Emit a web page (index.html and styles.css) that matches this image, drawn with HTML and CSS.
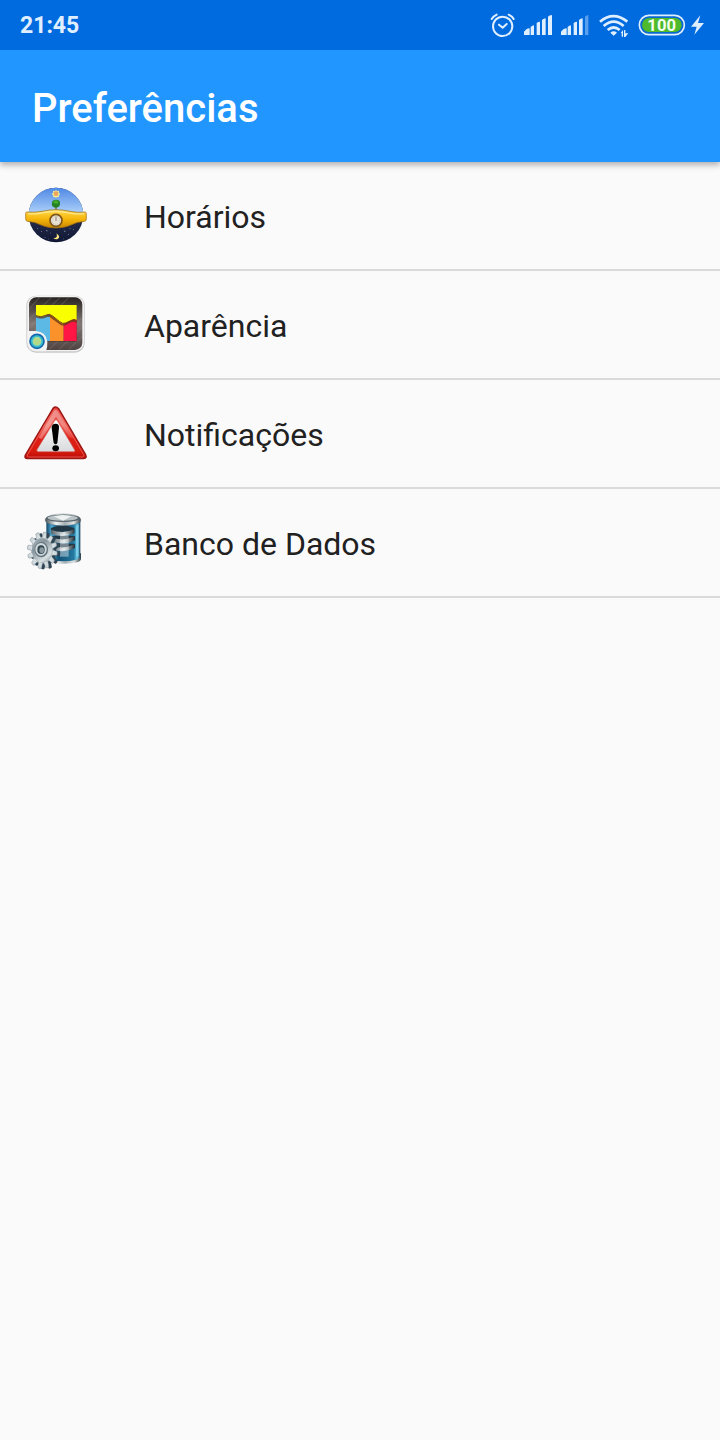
FILE: index.html
```html
<!DOCTYPE html>
<html lang="pt-BR">
<head>
<meta charset="utf-8">
<meta name="viewport" content="width=device-width, initial-scale=1">
<title>Preferências</title>
<link rel="stylesheet" href="styles.css">
</head>
<body>
<div class="status-bar">
  <time class="clock">21:45</time>
  <div class="status-icons">
    <svg class="alarm" viewBox="30 30 78 90" aria-label="Alarme">
      <g fill="none" stroke="#e0efff" stroke-width="6" stroke-linecap="round" stroke-linejoin="round">
        <circle cx="68" cy="79" r="29"/>
        <path d="M57 74l11 9 12-11M35 57q5-8 15-13M86 44q11 5 15 13"/>
      </g>
    </svg>
    <svg class="signal" viewBox="132 30 87 90" aria-label="Sinal 1">
      <path fill="#e0efff" d="M132 105v-10l7-7q5-3 10-3v20zM152 105V81q5-5 10-5v29zM170 105V69q5-4 10-4v40zM186 105V60q5-5 11-5v50zM204 105V50q5-5 10-5q2 0 2 3v57z"/>
    </svg>
    <svg class="signal" viewBox="243 30 87 90" aria-label="Sinal 2">
      <path fill="#e0efff" d="M243 105v-10l7-7q5-3 10-3v20zM263 105V81q5-5 10-5v29zM281 105V69q5-4 10-4v40zM297 105V60q5-5 11-5v50z"/>
      <path fill="#5a9fed" d="M315 105V50q5-5 10-5v60z"/>
    </svg>
    <svg class="wifi" viewBox="24 30 96 90" aria-label="Wi-Fi">
      <g fill="none" stroke="#e0efff" stroke-width="8">
        <path d="M30 65Q70 32 112 65M41 78Q71 52 101 78M53 90Q71 75 89 90"/>
      </g>
      <path fill="#e0efff" d="M61 98q10-8 20 0l-10 9zM92 99l7-9v20h-4v-11zM102 90h4v10h9l-9 11h-4z"/>
    </svg>
    <svg class="battery" viewBox="141 30 141 90" aria-label="Bateria">
      <rect x="145" y="46" width="135" height="58" rx="29" fill="#0869cf" stroke="#e0efff" stroke-width="5"/>
      <rect x="153" y="54" width="119" height="42" rx="21" fill="#4fba2c"/>
      <text x="212" y="93" class="charge">100</text>
    </svg>
    <svg class="bolt" viewBox="309 30 39 90" aria-label="Carregando">
      <path fill="#e0efff" d="M331 46l-28 34h17l-7 24 29-35h-18z"/>
    </svg>
  </div>
</div>
<header class="app-bar"><h1 class="title">Preferências</h1></header>
<main>
  <nav class="preferences" aria-label="Preferências">
    <a class="item" href="#horarios">
      <svg class="icon" viewBox="24 12 192 192" aria-hidden="true">
        <defs>
          <linearGradient id="sky" x2="0" y2="1"><stop stop-color="#4f88e4"/><stop offset="1" stop-color="#b4d6fb"/></linearGradient>
          <linearGradient id="night" x2="0" y2="1"><stop offset=".5" stop-color="#29314d"/><stop offset="1" stop-color="#101735"/></linearGradient>
          <linearGradient id="gold" x2="0" y2="1"><stop stop-color="#ffd94d"/><stop offset=".5" stop-color="#f6b70b"/><stop offset="1" stop-color="#c98600"/></linearGradient>
        </defs>
        <circle cx="120" cy="105" r="82" fill="url(#night)"/>
        <path fill="url(#sky)" d="M38 105a82 82 0 0 1 164 0z"/>
        <path fill="#fcf08f" d="M120 29l3 5 6-2-1 6 5 4-5 4 1 6-6-2-3 5-3-5-6 2 1-6-5-4 5-4-1-6 6 2z"/>
        <circle cx="120" cy="41" r="7" fill="#eca45b"/>
        <path stroke="#876425" stroke-width="4" d="M120 77v17"/>
        <path fill="#238324" d="M108 67q2-8 12-8 13 0 12 11 0 13-12 13-15 0-12-16z"/>
        <path fill="#46aa2c" d="M111 67q3-6 9-6 7 1 7 8-8 6-16-2z"/>
        <path fill="url(#gold)" stroke="#9a6911" stroke-width="2" d="M32 96q26 2 46-2 22-5 42-5t42 5q22 5 45 2 4 0 4 5v16q0 6-5 7-24 2-43 12-18 8-43 8t-43-8q-19-10-43-12-5-1-5-7v-16q0-5 3-5z"/>
        <path fill="none" stroke="#ffe789" stroke-width="4" d="M36 101q28 2 46-3 34-7 72 0 26 5 50 3"/>
        <circle cx="120" cy="121" r="18" fill="#e9e2d4" stroke="#805518" stroke-width="5"/>
        <circle cx="120" cy="121" r="12" fill="none" stroke="#a69b89" stroke-width="2" stroke-dasharray="2 4"/>
        <path stroke="#594e43" stroke-width="2" d="M120 110v13"/>
        <path fill="#ffe780" d="M121 160q15 11 4 17-6 3-13-3 7 1 10-3 3-4-1-11z"/>
        <path fill="#a5b4dc" d="M64 144h2v2h-2zM76 154h2v2h-2zM91 151h3v3h-3zM86 171h2v2h-2zM103 158h2v2h-2zM145 152h3v3h-3zM157 163h2v2h-2zM172 148h2v2h-2zM141 176h2v2h-2zM96 176h2v2h-2zM161 145h2v2h-2z"/>
      </svg>
      <span>Horários</span>
    </a>
    <a class="item" href="#aparencia">
      <svg class="icon" viewBox="24 15 192 192" aria-hidden="true">
        <defs>
          <linearGradient id="slate" x2="0" y2="1"><stop stop-color="#292421"/><stop offset=".5" stop-color="#827976"/><stop offset="1" stop-color="#4e4341"/></linearGradient>
          <clipPath id="panel"><rect x="39" y="28" width="160" height="158" rx="22"/></clipPath>
        </defs>
        <rect x="31" y="23" width="175" height="171" rx="29" fill="#c9c9c9"/>
        <rect x="34" y="24" width="170" height="166" rx="28" fill="#f2f2f2"/>
        <rect x="39" y="28" width="160" height="158" rx="22" fill="url(#slate)"/>
        <g clip-path="url(#panel)">
          <path stroke="#b0a5a0" stroke-opacity=".18" stroke-width="4" d="M36 67l36-40M40 94l68-67M39 120l94-93M40 145L159 28M99 185l100-96M128 185l71-68M157 185l42-40"/>
          <rect x="61" y="51" width="122" height="110" fill="#2f211e" opacity=".5"/>
          <path fill="#5cb9e5" d="M60 82h43v77H60z"/>
          <path fill="#fa912a" d="M102 80h41v79h-41z"/>
          <path fill="#ff1645" d="M143 92h39v67h-39z"/>
          <path fill="#5b3717" opacity=".75" d="M60 83q14 7 27 1 12-8 22 1l23 18q8 8 20 0l14-6q8-4 16 3v5q-9-7-17-2l-14 7q-12 6-21-2l-22-16q-9-9-20-3-16 6-28-1z"/>
          <path fill="#faff00" d="M60 51h122v46q-8-5-16 0l-17 8q-9 4-18-4l-21-17q-10-9-21-2-14 8-29 1z"/>
          <path fill="none" stroke="#744311" stroke-width="3" d="M60 83q15 7 29-1 11-7 21 2l21 17q9 8 18 4l17-8q8-5 16 0"/>
        </g>
        <path fill="#f2f2f2" d="M34 129h26q30 2 34 32 1 15-4 29H60q-26-1-26-27z"/>
        <circle cx="63" cy="160" r="20" fill="#9bdbaa" stroke="#1768ac" stroke-width="7"/>
        <circle cx="63" cy="160" r="16" fill="#a7dc9b" stroke="#32b9d0" stroke-width="5"/>
        <circle cx="63" cy="160" r="10" fill="#b3d987"/>
      </svg>
      <span>Aparência</span>
    </a>
    <a class="item" href="#notificacoes">
      <svg class="icon" viewBox="24 12 192 192" aria-hidden="true">
        <defs>
          <linearGradient id="red" x2="0" y2="1"><stop stop-color="#dd2a24"/><stop offset=".35" stop-color="#ef5a50"/><stop offset=".6" stop-color="#df2019"/><stop offset=".85" stop-color="#d91b0d"/><stop offset="1" stop-color="#b90c08"/></linearGradient>
          <linearGradient id="shine" x2="1" y2="1"><stop stop-color="#fff" stop-opacity=".55"/><stop offset="1" stop-color="#fff" stop-opacity=".1"/></linearGradient>
          <linearGradient id="sheet" x2="0" y2="1"><stop stop-color="#fff"/><stop offset="1" stop-color="#d9dadd"/></linearGradient>
        </defs>
        <path fill="url(#red)" stroke="#991715" stroke-width="4" stroke-linejoin="round" d="M111 31q8-8 17 1l81 138q5 11-6 12H34q-10-1-6-11z"/>
        <path fill="none" stroke="#f4776c" stroke-width="2" stroke-linejoin="round" d="M114 35q5-5 10 0l79 135q3 6-4 7H38q-6-1-4-6z"/>
        <path fill="url(#shine)" d="M115 37q5-3 9 1l51 85-15-5-40-62-43 67-9-4z"/>
        <path fill="url(#sheet)" stroke="#d0655f" stroke-width="2" stroke-linejoin="round" d="M116 68q4-5 8 0l52 88q2 5-3 5H66q-5-1-3-6z"/>
        <path d="M107 89q0-12 12-12 11 0 10 12l-5 46q-5 8-11 0z"/>
        <ellipse cx="119" cy="151" rx="10" ry="9"/>
      </svg>
      <span>Notificações</span>
    </a>
    <a class="item" href="#banco-de-dados">
      <svg class="icon" viewBox="24 15 192 192" aria-hidden="true">
        <defs>
          <linearGradient id="glass"><stop stop-color="#164565"/><stop offset=".15" stop-color="#4aa5d0"/><stop offset=".35" stop-color="#145177"/><stop offset=".8" stop-color="#24789f"/><stop offset=".91" stop-color="#68c9e7"/><stop offset="1" stop-color="#123b59"/></linearGradient>
          <linearGradient id="metal"><stop stop-color="#465158"/><stop offset=".3" stop-color="#f3f6f6"/><stop offset=".55" stop-color="#a5afb3"/><stop offset=".8" stop-color="#e0e5e6"/><stop offset="1" stop-color="#354047"/></linearGradient>
          <linearGradient id="disk"><stop stop-color="#59636b"/><stop offset=".55" stop-color="#d5dfe2"/><stop offset="1" stop-color="#202c35"/></linearGradient>
          <linearGradient id="steel" x1="28" y1="78" x2="126" y2="190" gradientUnits="userSpaceOnUse"><stop stop-color="#c4ced2"/><stop offset=".4" stop-color="#87959d"/><stop offset=".65" stop-color="#d8e0e2"/><stop offset="1" stop-color="#3f5564"/></linearGradient>
          <path id="tooth" d="M-8-36l2-18q6-3 12 0l2 18z"/>
          <g id="gear">
            <circle r="40"/>
            <use href="#tooth"/><use href="#tooth" transform="rotate(30)"/><use href="#tooth" transform="rotate(60)"/><use href="#tooth" transform="rotate(90)"/>
            <use href="#tooth" transform="rotate(120)"/><use href="#tooth" transform="rotate(150)"/><use href="#tooth" transform="rotate(180)"/><use href="#tooth" transform="rotate(210)"/>
            <use href="#tooth" transform="rotate(240)"/><use href="#tooth" transform="rotate(270)"/><use href="#tooth" transform="rotate(300)"/><use href="#tooth" transform="rotate(330)"/>
          </g>
          <linearGradient id="gear-face" x1="-40" y1="-50" x2="40" y2="50" gradientUnits="userSpaceOnUse"><stop stop-color="#a9b6bc"/><stop offset=".3" stop-color="#e0e7e9"/><stop offset=".5" stop-color="#95a3aa"/><stop offset=".7" stop-color="#d3dcdf"/><stop offset="1" stop-color="#61747f"/></linearGradient>
        </defs>
        <path fill="url(#metal)" d="M90 145v13q2 15 53 15 49 0 52-13v-18z"/>
        <path fill="url(#glass)" d="M91 45h102v108q-11 13-51 13-39 0-51-13z"/>
        <path fill="#203846" d="M105 66q34-15 70 0v14q-35 14-70 0zM105 90h70v13q-35 15-70 0zM105 113h70v13q-35 16-70 0z"/>
        <path fill="url(#disk)" d="M105 71q36 15 70-1v12q-34 16-70 1zM105 94q37 14 72-4v13q-31 17-72 3zM105 118q37 14 72-4v12q-31 17-72 4z"/>
        <path fill="#fff" opacity=".4" d="M132 83h26v69h-26z"/>
        <path fill="#8bd7ef" d="M180 59l8-3v94l-8 4z" opacity=".65"/>
        <path fill="url(#metal)" stroke="#536168" stroke-width="1" d="M88 38q10-14 53-14t53 14v8q-12 13-53 13T88 46z"/>
        <ellipse cx="141" cy="37" rx="51" ry="11" fill="#59666d"/>
        <ellipse cx="140" cy="36" rx="45" ry="8" fill="#bac4c7"/>
        <path fill="#eef2f2" d="M113 31l27-4 28 3-27 14z"/>
        <use href="#gear" transform="translate(88 135) scale(.82 1) rotate(10)" fill="#304554"/>
        <use href="#gear" transform="translate(79 133) scale(.82 1) rotate(10)" fill="url(#gear-face)" stroke="#5a6b75" stroke-width="1"/>
        <ellipse cx="78" cy="133" rx="30" ry="36" fill="url(#steel)"/>
        <ellipse cx="76" cy="131" rx="20" ry="23" fill="#65757d"/>
        <ellipse cx="75" cy="130" rx="17" ry="19" fill="#d0dadd"/>
        <ellipse cx="75" cy="131" rx="11" ry="13" fill="#31454f"/>
        <ellipse cx="77" cy="133" rx="7" ry="9" fill="#8a999f"/>
      </svg>
      <span>Banco de Dados</span>
    </a>
  </nav>
</main>
</body>
</html>
```
FILE: styles.css
```css
* { box-sizing: border-box; }

body {
  margin: 0;
  min-height: 100vh;
  background: #fafafa;
  color: #212121;
  font-family: Roboto, "Liberation Sans", sans-serif;
}

.status-bar {
  display: flex;
  align-items: center;
  justify-content: space-between;
  height: 50px;
  padding: 0 14px 0 20px;
  background: #006bdf;
  color: #e0efff;
}

.clock {
  font-size: 23px;
  font-weight: 700;
  line-height: 28px;
  padding-top: 2px;
}

.status-icons { display: flex; gap: 8px; }
.status-icons svg { height: 30px; overflow: visible; }
.alarm { width: 26px; }
.signal { width: 29px; }
.wifi { width: 32px; }
.battery { width: 47px; }
.bolt { width: 13px; }

.charge {
  fill: #f4fff0;
  font-size: 50px;
  font-weight: 700;
  text-anchor: middle;
}

.app-bar {
  display: flex;
  align-items: center;
  height: 112px;
  padding: 6px 32px 0;
  background: #2196ff;
  color: #fff;
  box-shadow: 0 3px 6px rgba(0, 0, 0, .3);
  clip-path: inset(0 0 -12px);
}

.title {
  margin: 0;
  font-size: 40px;
  font-weight: 500;
  line-height: 48px;
}

.preferences { display: flex; flex-direction: column; }

.item {
  display: flex;
  align-items: center;
  gap: 56px;
  padding: 22px 24px 21px;
  border-bottom: 2px solid #dadada;
  color: inherit;
  font-size: 32px;
  line-height: 40px;
  text-decoration: none;
}

.item span { padding-top: 2px; }

.icon {
  flex: none;
  width: 64px;
  height: 64px;
}
```
